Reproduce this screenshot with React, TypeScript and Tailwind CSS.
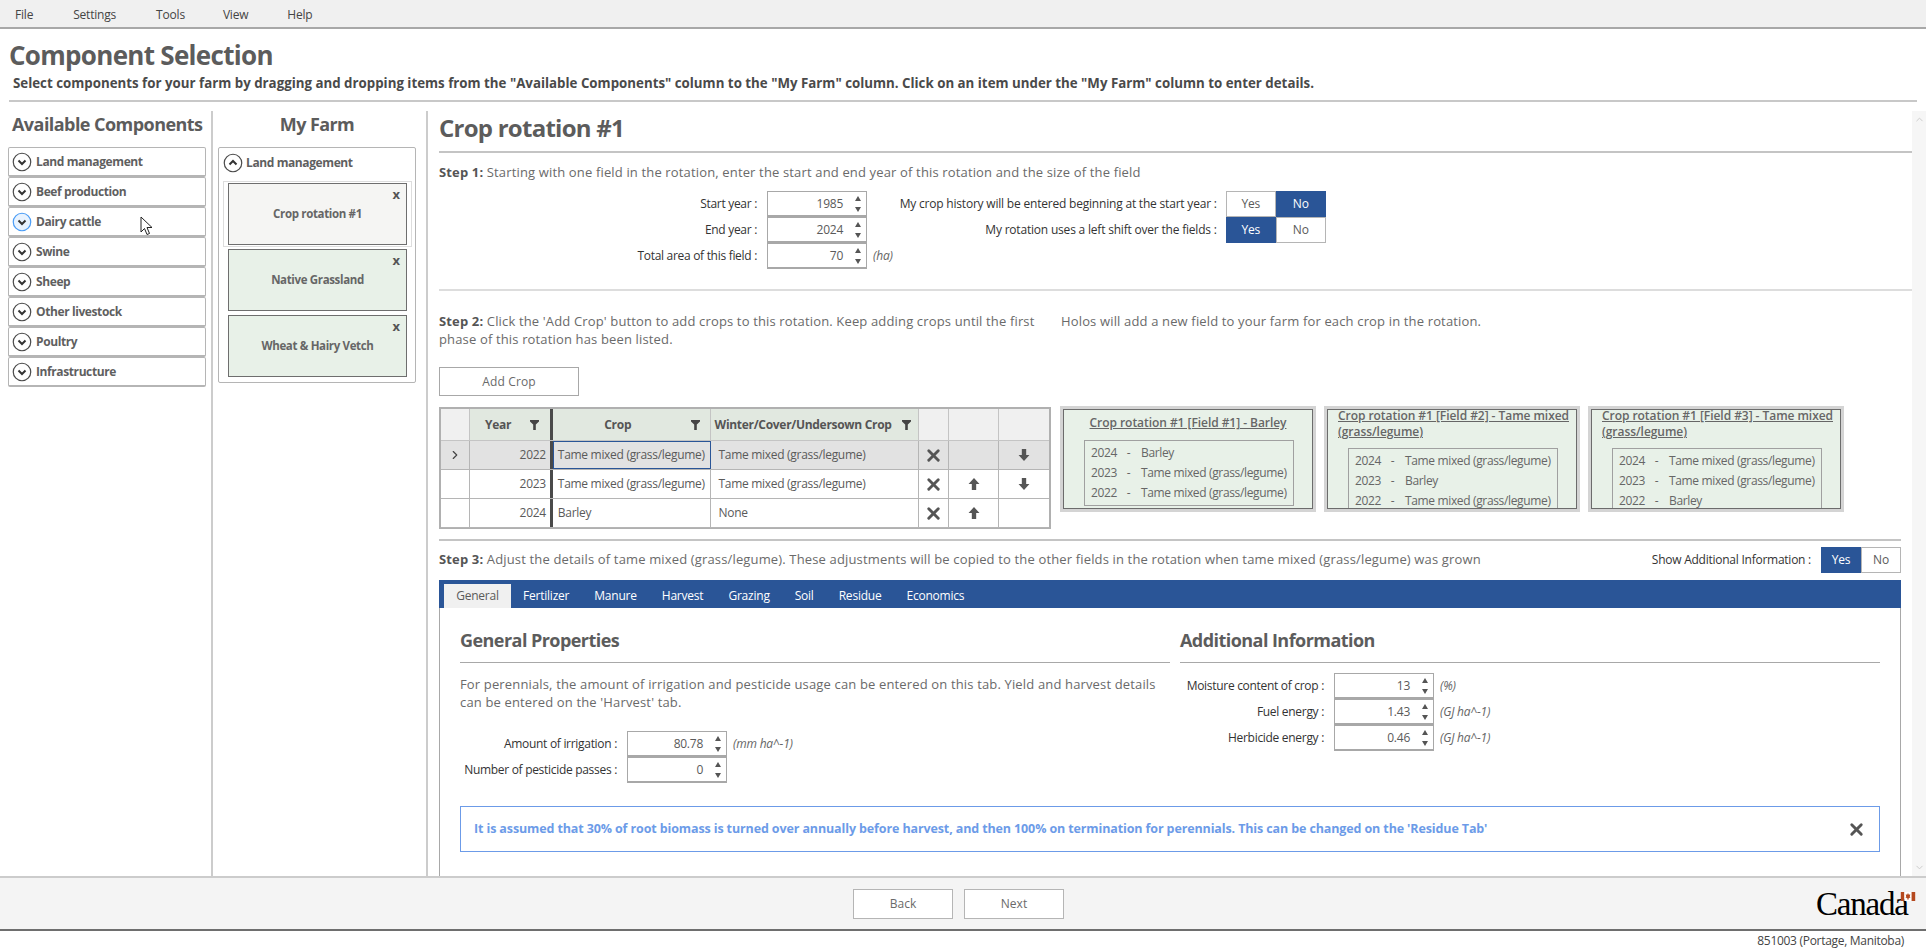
import { ChevronRight, ChevronUp, ChevronDown, X } from 'lucide-react';

type NumberFieldProps = {
  label: string;
  value: string;
  unit?: string;
  labelWidth: string;
};

type ToggleProps = {
  yes: boolean;
  width: string;
};

const availableItems = [
  'Land management',
  'Beef production',
  'Dairy cattle',
  'Swine',
  'Sheep',
  'Other livestock',
  'Poultry',
  'Infrastructure',
];

const tabs = ['Fertilizer', 'Manure', 'Harvest', 'Grazing', 'Soil', 'Residue', 'Economics'];

function CircleChevron({ up, hover }: { up?: boolean; hover?: boolean }) {
  return (
    <svg width="20" height="20" viewBox="0 0 20 20" className="shrink-0">
      <circle
        cx="10"
        cy="10"
        r="8.75"
        fill={hover ? '#e8f3ff' : '#ffffff'}
        stroke={hover ? '#4a9cf5' : '#4a4a4a'}
        strokeWidth="1.2"
      />
      <path
        d={up ? 'M6.5 11.5 L10 8 L13.5 11.5' : 'M6.5 8.5 L10 12 L13.5 8.5'}
        fill="none"
        stroke="#333333"
        strokeWidth="2"
      />
    </svg>
  );
}

function AccordionRow({ label, hover }: { label: string; hover?: boolean }) {
  return (
    <div className="flex h-[30px] w-[198px] items-center gap-[4px] rounded-[2px] border border-[#b5b5b5] border-b-2 pl-[3px] text-[12px] font-bold tracking-[-0.4px] text-[#5f5f5f]">
      <CircleChevron hover={hover} />
      <span className="mt-[1px]">{label}</span>
    </div>
  );
}

function FarmCard({ label, selected }: { label: string; selected?: boolean }) {
  const bg = selected ? 'bg-[#f5f5f3]' : 'bg-[#e8f1e8]';
  return (
    <div className={`h-[66px] w-[189px] border px-[4px] py-[1px] ${selected ? 'border-[#dddddd]' : 'border-transparent'}`}>
      <div className={`flex h-full flex-col border border-[#6e6e6e] ${bg}`}>
        <div className="flex h-[17px] items-end justify-end pr-[6px] text-[13px] leading-none font-bold text-[#555555]">x</div>
        <div className="mt-[4px] text-center text-[11.5px] font-bold tracking-[-0.35px] text-[#666666]">{label}</div>
      </div>
    </div>
  );
}

function Spinner() {
  return (
    <div className="flex flex-col items-center gap-[6px]">
      <div className="h-0 w-0 border-x-[3px] border-b-[5px] border-x-transparent border-b-[#555555]" />
      <div className="h-0 w-0 border-x-[3px] border-t-[5px] border-x-transparent border-t-[#555555]" />
    </div>
  );
}

function NumberField({ label, value, unit, labelWidth }: NumberFieldProps) {
  return (
    <div className="flex h-[26px] items-center">
      <div className={`${labelWidth} shrink-0 pr-[10px] text-right text-[12px] tracking-[-0.3px] text-[#333333]`}>{label}</div>
      <div className="flex h-[26px] w-[100px] items-center justify-end border border-[#a8a8a8] border-b-2 pr-[5px] text-[12px] tracking-[-0.25px] text-[#5a5a5a]">
        <span className="mr-[12px]">{value}</span>
        <Spinner />
      </div>
      {unit && <span className="ml-[6px] text-[12px] tracking-[-0.2px] text-[#666666] italic">{unit}</span>}
    </div>
  );
}

function Toggle({ yes, width }: ToggleProps) {
  const on = 'bg-[#2a5597] text-white';
  const off = 'bg-white text-[#5a5a5a] border border-[#b5b5b5]';
  return (
    <div className="flex">
      <div className={`flex h-[26px] ${width} items-center justify-center text-[12px] tracking-[-0.25px] ${yes ? on : off}`}>Yes</div>
      <div className={`flex h-[26px] ${width} items-center justify-center text-[12px] tracking-[-0.25px] ${yes ? off : on}`}>No</div>
    </div>
  );
}

function FieldCard({ title, crops, wrapped }: { title: string; crops: string[]; wrapped?: boolean }) {
  const years = ['2024', '2023', '2022'];
  return (
    <div className="h-[106px] w-[256px] shrink-0 border-[3px] border-[#d4d4d4]">
      <div className="h-full overflow-hidden border border-[#6c6c6c] bg-[#e8f1e8] text-[12px] tracking-[-0.35px] text-[#666666]">
        <div className={`font-semibold tracking-[-0.05px] underline ${wrapped ? '-mt-[2px] pr-[2px] pl-[10px] text-left leading-[16px]' : 'pt-[5px] text-center leading-[16px]'}`}>{title}</div>
        <div className={`ml-[20px] flex w-[210px] flex-col border border-[#a0a0a0] py-[2px] pl-[6px] ${wrapped ? 'mt-[8px]' : 'mt-[9px]'}`}>
          {crops.map((crop, i) => (
            <div key={years[i]} className="flex h-[20px] items-center whitespace-nowrap">
              <span className="w-[25px]">{years[i]}</span>
              <span className="w-[25px] text-center">-</span>
              <span>{crop}</span>
            </div>
          ))}
        </div>
      </div>
    </div>
  );
}

function FilterIcon() {
  return (
    <svg width="9" height="10" viewBox="0 0 9 10">
      <path d="M0 0 H9 V1.5 L5.8 4.6 V10 H3.2 V4.6 L0 1.5 Z" fill="#444444" />
    </svg>
  );
}

function ArrowIcon({ up }: { up?: boolean }) {
  return (
    <svg width="12" height="14" viewBox="0 0 11 12" className={up ? '' : 'rotate-180'}>
      <path d="M5.5 0.5 L10.5 6 H7.5 V11.5 H3.5 V6 H0.5 Z" fill="#555555" />
    </svg>
  );
}

function CropRow({ year, crop, winter, selected, up, down }: { year: string; crop: string; winter: string; selected?: boolean; up?: boolean; down?: boolean }) {
  const cell = 'flex h-full items-center border-r border-[#b5b5b5]';
  return (
    <div className={`flex h-[29px] border-b border-[#b5b5b5] text-[12px] tracking-[-0.3px] text-[#5a5a5a] ${selected ? 'bg-[#e2e2e2]' : 'bg-white'}`}>
      <div className={`${cell} w-[29px] justify-center`}>{selected && <ChevronRight size={14} strokeWidth={2} color="#444444" />}</div>
      <div className={`${cell} w-[80px] justify-end border-r-0 pr-[4px]`}>{year}</div>
      <div className="h-full w-[3px] bg-[#4a4a4a]" />
      <div className={`${cell} w-[158px] pl-[5px] whitespace-nowrap ${selected ? 'outline outline-1 -outline-offset-1 outline-[#2a5597]' : ''}`}>{crop}</div>
      <div className={`${cell} w-[209px] pl-[8px]`}>{winter}</div>
      <div className={`${cell} w-[30px] justify-center`}>
        <X size={19} strokeWidth={3.6} color="#555555" />
      </div>
      <div className={`${cell} w-[50px] justify-center`}>{up && <ArrowIcon up />}</div>
      <div className="flex h-full w-[50px] items-center justify-center">{down && <ArrowIcon />}</div>
    </div>
  );
}

function CropTable() {
  const head = 'flex h-full items-center border-r border-[#c4c4c4]';
  return (
    <div className="h-[122px] w-[612px] shrink-0 border-2 border-[#b0b0b0]">
      <div className="flex h-[32px] border-b border-[#c4c4c4] text-[12px] font-bold tracking-[-0.3px] text-[#555555]">
        <div className={`${head} w-[29px] bg-[#f0f0f0]`} />
        <div className={`${head} w-[80px] border-r-0 bg-[#e1e8e0] pl-[15px]`}>
          <span>Year</span>
          <span className="ml-[19px]"><FilterIcon /></span>
        </div>
        <div className="h-full w-[3px] bg-[#4a4a4a]" />
        <div className={`${head} relative w-[158px] justify-center bg-[#e1e8e0] pr-[27px]`}>
          <span>Crop</span>
          <span className="absolute right-[10px]"><FilterIcon /></span>
        </div>
        <div className={`${head} w-[209px] bg-[#e1e8e0] pl-[4px] whitespace-nowrap`}>
          <span>Winter/Cover/Undersown Crop</span>
          <span className="ml-[10px]"><FilterIcon /></span>
        </div>
        <div className={`${head} w-[30px] bg-[#f0f0f0]`} />
        <div className={`${head} w-[50px] bg-[#f0f0f0]`} />
        <div className="h-full w-[50px] bg-[#f0f0f0]" />
      </div>
      <CropRow year="2022" crop="Tame mixed (grass/legume)" winter="Tame mixed (grass/legume)" selected down />
      <CropRow year="2023" crop="Tame mixed (grass/legume)" winter="Tame mixed (grass/legume)" up down />
      <CropRow year="2024" crop="Barley" winter="None" up />
    </div>
  );
}

function CanadaLogo() {
  return (
    <div className="relative mr-[10px] h-[30px] w-[100px] font-['Liberation_Serif',serif] text-[33px] leading-[30px] tracking-[-1.2px] text-black">
      Canada
      <svg width="16" height="9" viewBox="0 0 16 10" className="absolute top-[3px] right-0">
        <rect x="0" y="0" width="4" height="10" fill="#b5491f" />
        <rect x="4" y="0" width="8" height="10" fill="#ffffff" />
        <rect x="12" y="0" width="4" height="10" fill="#b5491f" />
        <path d="M8 1 L9 3 L10.5 2.6 L10 5.5 L11 5.5 L8.4 7.6 V9 H7.6 V7.6 L5 5.5 L6 5.5 L5.5 2.6 L7 3 Z" fill="#b5491f" />
      </svg>
    </div>
  );
}

export default function App() {
  return (
    <div className="relative flex h-[951px] w-[1926px] flex-col overflow-hidden bg-white font-['Open_Sans',sans-serif]">
      <nav className="flex h-[29px] shrink-0 items-center gap-[41px] border-b-2 border-[#a8a8a8] bg-[#f0f0f0] pt-[2px] pl-[15px] text-[12px] tracking-[-0.2px] text-[#444444]">
        <span className="-mr-[1px]">File</span>
        <span>Settings</span>
        <span className="-ml-[1px]">Tools</span>
        <span className="-ml-[3px]">View</span>
        <span className="-ml-[2px]">Help</span>
      </nav>

      <header className="mx-[9px] h-[73px] shrink-0 border-b-2 border-[#c8c8c8]">
        <h1 className="mt-[7px] text-[26px] leading-[38px] font-bold tracking-[-0.7px] text-[#5c5c5c]">Component Selection</h1>
        <p className="ml-[4px] text-[13.3px] leading-[18px] font-bold text-[#4a4a4a]">
          Select components for your farm by dragging and dropping items from the "Available Components" column to the "My Farm" column. Click on an item under the "My Farm" column to enter details.
        </p>
      </header>

      <div className="mt-[9px] flex min-h-0 flex-1">
        <aside className="w-[213px] shrink-0 border-r-2 border-[#cccccc] pl-[8px]">
          <h2 className="ml-[4px] text-[18px] leading-[26px] font-bold tracking-[-0.55px] whitespace-nowrap text-[#5c5c5c]">Available Components</h2>
          <div className="mt-[10px] flex flex-col">
            {availableItems.map((item) => (
              <AccordionRow key={item} label={item} hover={item === 'Dairy cattle'} />
            ))}
          </div>
        </aside>

        <aside className="w-[215px] shrink-0 border-r-2 border-[#cccccc] pl-[5px]">
          <h2 className="w-[198px] text-center text-[18px] leading-[26px] font-bold tracking-[-0.6px] text-[#5c5c5c]">My Farm</h2>
          <div className="mt-[10px] h-[236px] w-[198px] rounded-[2px] border border-[#b5b5b5] pl-[4px]">
            <div className="mb-[4px] flex h-[29px] items-center gap-[3px] text-[12px] font-bold tracking-[-0.4px] text-[#5f5f5f]">
              <CircleChevron up />
              <span>Land management</span>
            </div>
            <div className="flex flex-col">
              <FarmCard label="Crop rotation #1" selected />
              <FarmCard label="Native Grassland" />
              <FarmCard label="Wheat & Hairy Vetch" />
            </div>
          </div>
        </aside>

        <main className="flex min-w-0 flex-1">
          <div className="w-[1484px] shrink-0 pl-[11px] text-[13px] tracking-[0.15px] text-[#6a6a6a]">
            <h2 className="mt-[1px] text-[24px] leading-[32px] font-bold tracking-[-0.75px] text-[#5c5c5c]">Crop rotation #1</h2>
            <div className="mt-[7px] h-[2px] bg-[#c4c4c4]" />

            <p className="mt-[10px] leading-[18px]">
              <b className="font-bold text-[#555555]">Step 1:</b> Starting with one field in the rotation, enter the start and end year of this rotation and the size of the field
            </p>
            <div className="mt-[10px] flex h-[78px]">
              <div className="flex flex-col">
                <NumberField label="Start year :" value="1985" labelWidth="w-[328px]" />
                <NumberField label="End year :" value="2024" labelWidth="w-[328px]" />
                <NumberField label="Total area of this field :" value="70" unit="(ha)" labelWidth="w-[328px]" />
              </div>
              <div className="flex w-[433px] shrink-0 flex-col">
                <div className="flex items-center justify-end gap-[9px] text-[12px] tracking-[-0.2px] text-[#333333]">
                  <span>My crop history will be entered beginning at the start year :</span>
                  <Toggle yes={false} width="w-[50px]" />
                </div>
                <div className="flex items-center justify-end gap-[9px] text-[12px] tracking-[-0.2px] text-[#333333]">
                  <span>My rotation uses a left shift over the fields :</span>
                  <Toggle yes width="w-[50px]" />
                </div>
              </div>
            </div>
            <div className="mt-[20px] h-[2px] bg-[#dddddd]" />

            <div className="mt-[21px] flex leading-[18px]">
              <p className="w-[622px] shrink-0">
                <b className="font-bold text-[#555555]">Step 2:</b> Click the 'Add Crop' button to add crops to this rotation. Keep adding crops until the first phase of this rotation has been listed.
              </p>
              <p>Holos will add a new field to your farm for each crop in the rotation.</p>
            </div>
            <button className="mt-[19px] flex h-[29px] w-[140px] items-center justify-center border border-[#a8a8a8] text-[12px] text-[#6a6a6a]">Add Crop</button>

            <div className="mt-[11px] flex gap-[9px]">
              <CropTable />
              <div className="-mt-[1px] flex gap-[8px]">
                <FieldCard title="Crop rotation #1 [Field #1] - Barley" crops={['Barley', 'Tame mixed (grass/legume)', 'Tame mixed (grass/legume)']} />
                <FieldCard wrapped title="Crop rotation #1 [Field #2] - Tame mixed (grass/legume)" crops={['Tame mixed (grass/legume)', 'Barley', 'Tame mixed (grass/legume)']} />
                <FieldCard wrapped title="Crop rotation #1 [Field #3] - Tame mixed (grass/legume)" crops={['Tame mixed (grass/legume)', 'Tame mixed (grass/legume)', 'Barley']} />
              </div>
            </div>
            <div className="mt-[10px] h-[2px] w-[1462px] bg-[#c4c4c4]" />

            <div className="mt-[6px] flex h-[26px] w-[1462px] items-center">
              <p className="flex-1">
                <b className="font-bold text-[#555555]">Step 3:</b> Adjust the details of tame mixed (grass/legume). These adjustments will be copied to the other fields in the rotation when tame mixed (grass/legume) was grown
              </p>
              <span className="mr-[10px] text-[12px] tracking-[-0.25px] text-[#333333]">Show Additional Information :</span>
              <Toggle yes width="w-[40px]" />
            </div>

            <div className="mt-[7px] flex h-[28px] w-[1462px] items-end gap-[25px] bg-[#2a5597] pl-[5px] text-[12px] tracking-[-0.22px] text-white">
              <div className="-mr-[13px] flex h-[24px] w-[67px] items-center justify-center bg-[#f0f0f0] text-[#5a5a5a]">General</div>
              {tabs.map((tab) => (
                <span key={tab} className="flex h-[24px] items-center">{tab}</span>
              ))}
            </div>

            <div className="h-[271px] w-[1462px] border-x border-[#a8a8a8] px-[20px]">
              <div className="flex gap-[10px]">
                <section className="w-[710px] shrink-0">
                  <h3 className="mt-[20px] border-b border-[#a8a8a8] pb-[9px] text-[18px] leading-[25px] font-bold tracking-[-0.55px] text-[#5c5c5c]">General Properties</h3>
                  <p className="mt-[12px] w-[700px] leading-[18px]">
                    For perennials, the amount of irrigation and pesticide usage can be entered on this tab. Yield and harvest details can be entered on the 'Harvest' tab.
                  </p>
                  <div className="mt-[20px] flex flex-col">
                    <NumberField label="Amount of irrigation :" value="80.78" unit="(mm ha^-1)" labelWidth="w-[167px]" />
                    <NumberField label="Number of pesticide passes :" value="0" labelWidth="w-[167px]" />
                  </div>
                </section>
                <section className="w-[700px] shrink-0">
                  <h3 className="mt-[20px] border-b border-[#a8a8a8] pb-[9px] text-[18px] leading-[25px] font-bold tracking-[-0.55px] text-[#5c5c5c]">Additional Information</h3>
                  <div className="mt-[10px] flex flex-col">
                    <NumberField label="Moisture content of crop :" value="13" unit="(%)" labelWidth="w-[154px]" />
                    <NumberField label="Fuel energy :" value="1.43" unit="(GJ ha^-1)" labelWidth="w-[154px]" />
                    <NumberField label="Herbicide energy :" value="0.46" unit="(GJ ha^-1)" labelWidth="w-[154px]" />
                  </div>
                </section>
              </div>
              <div className="mt-[23px] flex h-[46px] items-center justify-between border border-[#6c9be8] pr-[13px] pl-[13px] text-[12.5px] font-bold tracking-[-0.12px] text-[#6c9be8]">
                <span>It is assumed that 30% of root biomass is turned over annually before harvest, and then 100% on termination for perennials. This can be changed on the 'Residue Tab'</span>
                <X size={19} strokeWidth={3.6} color="#555555" />
              </div>
            </div>
          </div>

          <div className="flex flex-1 flex-col items-center justify-between bg-[#f6f6f6] py-[3px] text-[#c8c8c8]">
            <ChevronUp size={11} />
            <ChevronDown size={11} />
          </div>
        </main>
      </div>

      <footer className="flex h-[55px] shrink-0 items-center justify-end border-y-2 border-t-[#cccccc] border-b-[#6e6e6e] bg-[#f4f4f4]">
        <div className="mr-[752px] flex gap-[11px] text-[12px] text-[#6a6a6a]">
          <button className="flex h-[30px] w-[100px] items-center justify-center border border-[#b5b5b5] bg-white">Back</button>
          <button className="flex h-[30px] w-[100px] items-center justify-center border border-[#b5b5b5] bg-white">Next</button>
        </div>
        <CanadaLogo />
      </footer>
      <div className="flex h-[20px] shrink-0 items-center justify-end pr-[22px] text-[12px] tracking-[-0.3px] text-[#444444]">851003 (Portage, Manitoba)</div>

      <svg width="14" height="20" viewBox="0 0 14 20" className="absolute top-[216px] left-[140px]">
        <path d="M1 1 V16 L4.5 12.5 L7 18.5 L9.5 17.5 L7 11.5 H12 Z" fill="#ffffff" stroke="#222222" strokeWidth="1" />
      </svg>
    </div>
  );
}
